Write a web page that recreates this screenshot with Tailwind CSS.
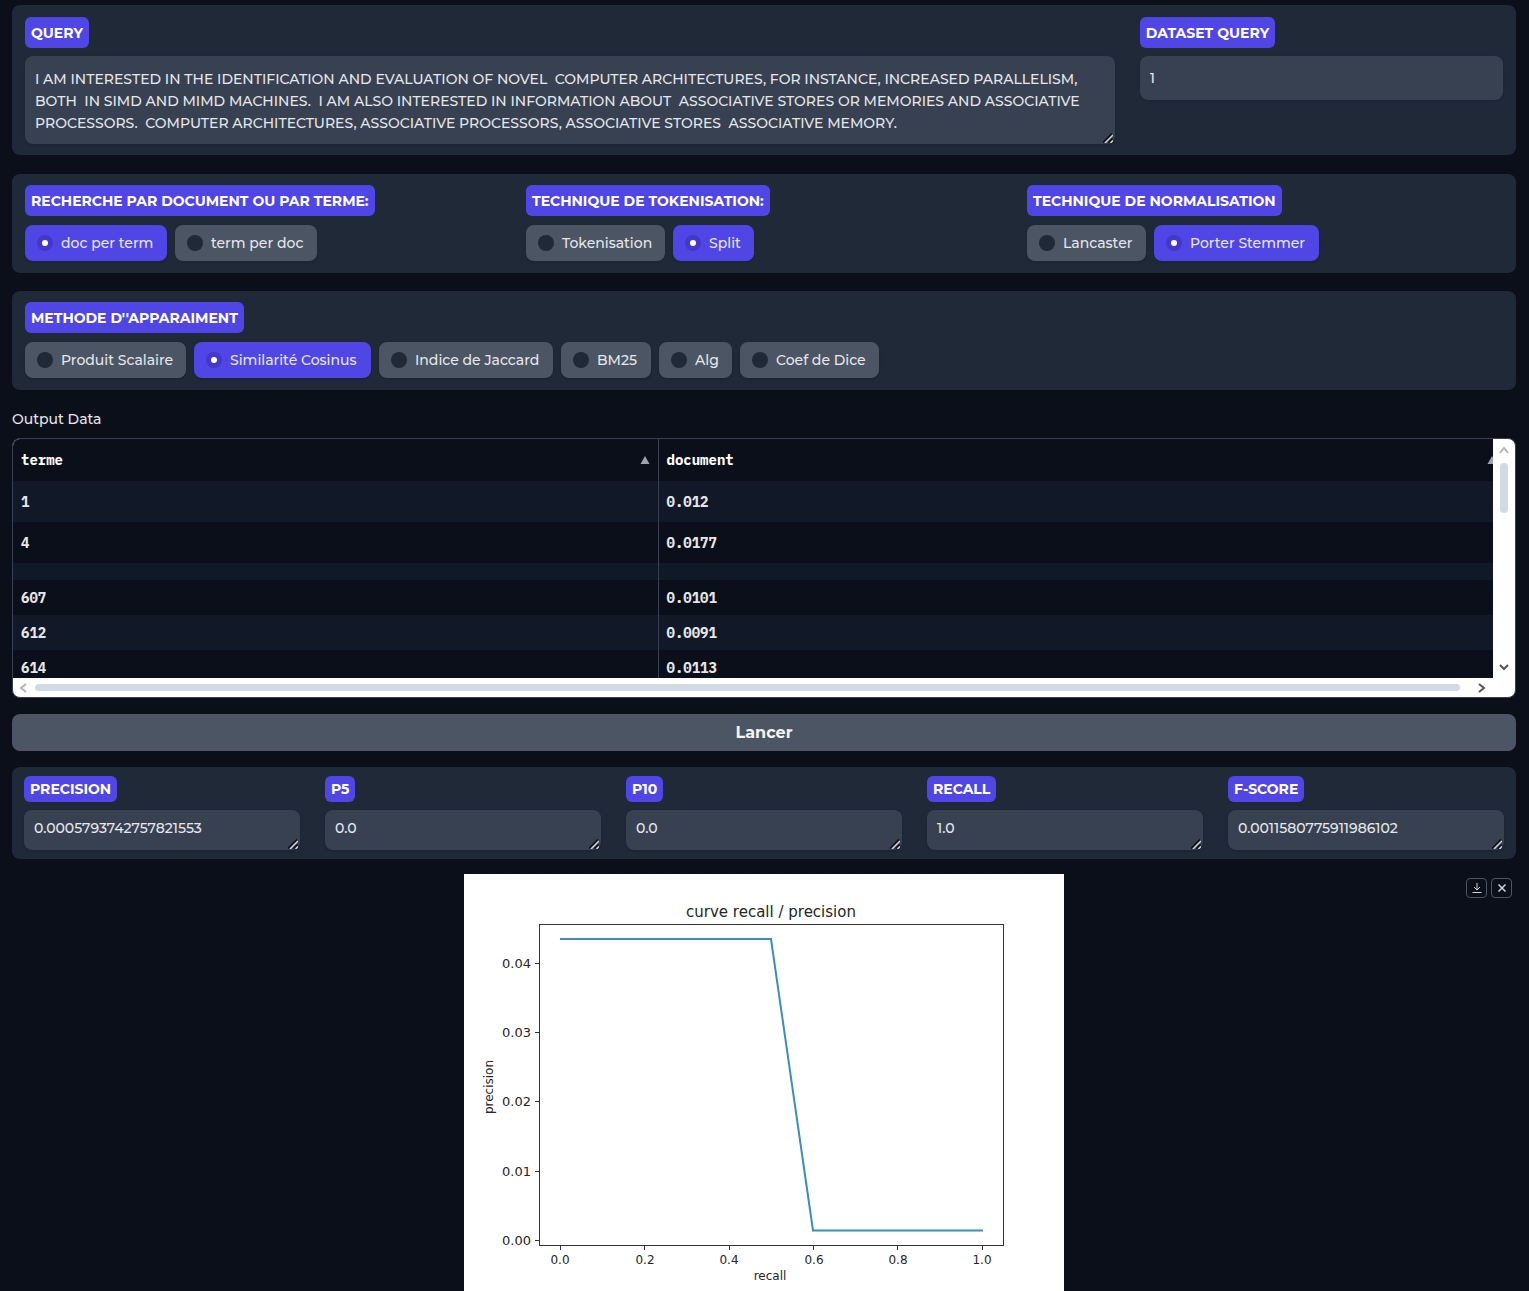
<!DOCTYPE html>
<html lang="fr">
<head>
<meta charset="utf-8">
<meta name="viewport" content="width=device-width, initial-scale=1">
<title>Recherche d'information</title>
<script src="https://cdn.jsdelivr.net/npm/@tailwindcss/browser@4"></script>
</head>
<body class="bg-[#0b0f19] pl-3 pr-[13px] pt-[5px] font-['Montserrat','Inter',sans-serif] text-sm font-medium text-[#e5e7eb]">
<main class="flex flex-col">

  <!-- Query -->
  <section class="grid grid-cols-[3fr_1fr] items-start gap-[25px] rounded-lg bg-[#1f2937] px-[13px] pb-[11px] pt-3">
    <div class="flex flex-col items-start gap-2">
      <label for="query" class="flex h-[31px] items-center rounded-md bg-[#4f46e5] px-1.5 font-bold text-white">QUERY</label>
      <div class="relative w-full">
        <textarea id="query" class="block h-[88px] w-full resize-none overflow-hidden whitespace-pre rounded-lg bg-[#374151] px-[10px] py-3 leading-[22px] shadow-sm">I AM INTERESTED IN THE IDENTIFICATION AND EVALUATION OF NOVEL  COMPUTER ARCHITECTURES, FOR INSTANCE, INCREASED PARALLELISM,
BOTH  IN SIMD AND MIMD MACHINES.  I AM ALSO INTERESTED IN INFORMATION ABOUT  ASSOCIATIVE STORES OR MEMORIES AND ASSOCIATIVE
PROCESSORS.  COMPUTER ARCHITECTURES, ASSOCIATIVE PROCESSORS, ASSOCIATIVE STORES  ASSOCIATIVE MEMORY.</textarea>
        <svg class="pointer-events-none absolute bottom-px right-0.5 size-[10px] fill-none" viewBox="0 0 10 10"><path class="stroke-black/80 stroke-[1.500]" d="M0 9.500 9 .5M5.500 9.500l4-4"/><path class="stroke-[#d1d5db] stroke-[1.500]" d="M2 10l8-8M7.500 10 10 7.500"/></svg>
      </div>
    </div>
    <div class="flex flex-col items-start gap-2">
      <label for="dataset" class="flex h-[31px] items-center rounded-md bg-[#4f46e5] px-1.5 font-bold text-white">DATASET QUERY</label>
      <input id="dataset" type="text" value="1" class="h-11 w-full rounded-lg bg-[#374151] px-[10px] shadow-sm">
    </div>
  </section>

  <!-- Options -->
  <section class="mt-[19px] grid grid-cols-3 gap-[25px] rounded-lg bg-[#1f2937] px-[13px] pb-3 pt-[11px]">
    <fieldset class="min-w-0">
      <legend class="mb-[9px] flex h-[31px] items-center whitespace-nowrap rounded-md bg-[#4f46e5] px-1.5 font-bold text-white">RECHERCHE PAR DOCUMENT OU PAR TERME:</legend>
      <div class="flex gap-2">
        <label class="flex h-9 min-w-[142px] items-center gap-2 whitespace-nowrap rounded-lg bg-[#4f46e5] px-3 shadow-sm"><input type="radio" name="mode" checked class="size-4 appearance-none rounded-full border-[5px] border-[#4338ca] bg-white">doc per term</label>
        <label class="flex h-9 min-w-[142px] items-center gap-2 whitespace-nowrap rounded-lg bg-[#4b5563] px-3 shadow-sm"><input type="radio" name="mode" class="size-4 appearance-none rounded-full bg-[#1f2937]">term per doc</label>
      </div>
    </fieldset>
    <fieldset class="min-w-0">
      <legend class="mb-[9px] flex h-[31px] items-center whitespace-nowrap rounded-md bg-[#4f46e5] px-1.5 font-bold text-white">TECHNIQUE DE TOKENISATION:</legend>
      <div class="flex gap-2">
        <label class="flex h-9 min-w-[139px] items-center gap-2 whitespace-nowrap rounded-lg bg-[#4b5563] px-3 shadow-sm"><input type="radio" name="token" class="size-4 appearance-none rounded-full bg-[#1f2937]">Tokenisation</label>
        <label class="flex h-9 min-w-[81px] items-center gap-2 whitespace-nowrap rounded-lg bg-[#4f46e5] px-3 shadow-sm"><input type="radio" name="token" checked class="size-4 appearance-none rounded-full border-[5px] border-[#4338ca] bg-white">Split</label>
      </div>
    </fieldset>
    <fieldset class="min-w-0">
      <legend class="mb-[9px] flex h-[31px] items-center whitespace-nowrap rounded-md bg-[#4f46e5] px-1.5 font-bold text-white">TECHNIQUE DE NORMALISATION</legend>
      <div class="flex gap-2">
        <label class="flex h-9 min-w-[119px] items-center gap-2 whitespace-nowrap rounded-lg bg-[#4b5563] px-3 shadow-sm"><input type="radio" name="norm" class="size-4 appearance-none rounded-full bg-[#1f2937]">Lancaster</label>
        <label class="flex h-9 min-w-[165px] items-center gap-2 whitespace-nowrap rounded-lg bg-[#4f46e5] px-3 shadow-sm"><input type="radio" name="norm" checked class="size-4 appearance-none rounded-full border-[5px] border-[#4338ca] bg-white">Porter Stemmer</label>
      </div>
    </fieldset>
  </section>

  <!-- Matching method -->
  <section class="mt-[18px] rounded-lg bg-[#1f2937] px-[13px] pb-3 pt-[11px]">
    <fieldset class="min-w-0">
      <legend class="mb-[9px] flex h-[31px] items-center whitespace-nowrap rounded-md bg-[#4f46e5] px-1.5 font-bold text-white">METHODE D''APPARAIMENT</legend>
      <div class="flex flex-wrap gap-2">
        <label class="flex h-9 min-w-[161px] items-center gap-2 whitespace-nowrap rounded-lg bg-[#4b5563] px-3 shadow-sm"><input type="radio" name="method" class="size-4 appearance-none rounded-full bg-[#1f2937]">Produit Scalaire</label>
        <label class="flex h-9 min-w-[177px] items-center gap-2 whitespace-nowrap rounded-lg bg-[#4f46e5] px-3 shadow-sm"><input type="radio" name="method" checked class="size-4 appearance-none rounded-full border-[5px] border-[#4338ca] bg-white">Similarité Cosinus</label>
        <label class="flex h-9 min-w-[174px] items-center gap-2 whitespace-nowrap rounded-lg bg-[#4b5563] px-3 shadow-sm"><input type="radio" name="method" class="size-4 appearance-none rounded-full bg-[#1f2937]">Indice de Jaccard</label>
        <label class="flex h-9 min-w-[90px] items-center gap-2 whitespace-nowrap rounded-lg bg-[#4b5563] px-3 shadow-sm"><input type="radio" name="method" class="size-4 appearance-none rounded-full bg-[#1f2937]">BM25</label>
        <label class="flex h-9 min-w-[73px] items-center gap-2 whitespace-nowrap rounded-lg bg-[#4b5563] px-3 shadow-sm"><input type="radio" name="method" class="size-4 appearance-none rounded-full bg-[#1f2937]">Alg</label>
        <label class="flex h-9 min-w-[139px] items-center gap-2 whitespace-nowrap rounded-lg bg-[#4b5563] px-3 shadow-sm"><input type="radio" name="method" class="size-4 appearance-none rounded-full bg-[#1f2937]">Coef de Dice</label>
      </div>
    </fieldset>
  </section>

  <!-- Results -->
  <h2 class="mt-[18px] leading-[22px]" id="output">Output Data</h2>
  <div class="mt-2 overflow-hidden rounded-lg border border-[#374151] bg-white">
    <div class="flex">
      <div class="h-[239px] min-w-0 flex-1 overflow-hidden bg-[#0b0f19]">
        <table aria-labelledby="output" class="w-full table-fixed border-collapse text-left font-['IBM_Plex_Mono','Liberation_Mono',monospace] text-sm font-bold">
          <colgroup><col class="w-[645px]"><col></colgroup>
          <thead>
            <tr class="h-[42px] text-white">
              <th class="border-r border-[#374151] px-2"><div class="flex items-center justify-between">terme<svg class="h-2 w-[10px] fill-[#9ca3af]" viewBox="0 0 10 8"><path d="M5 0 9.500 8H.5Z"/></svg></div></th>
              <th class="pl-2"><div class="flex items-center justify-between">document<svg class="-mr-1 h-2 w-[10px] fill-[#9ca3af]" viewBox="0 0 10 8"><path d="M5 0 9.500 8H.5Z"/></svg></div></th>
            </tr>
          </thead>
          <tbody>
            <tr class="h-[41px] bg-[#111827]"><td class="border-r border-[#374151] px-2">1</td><td class="px-2">0.012</td></tr>
            <tr class="h-[41px]"><td class="border-r border-[#374151] px-2">4</td><td class="px-2">0.0177</td></tr>
            <tr class="h-[17px] bg-[#111827]"><td class="border-r border-[#374151]"></td><td></td></tr>
            <tr class="h-[35px]"><td class="border-r border-[#374151] px-2">607</td><td class="px-2">0.0101</td></tr>
            <tr class="h-[35px] bg-[#111827]"><td class="border-r border-[#374151] px-2">612</td><td class="px-2">0.0091</td></tr>
            <tr class="h-[35px]"><td class="border-r border-[#374151] px-2">614</td><td class="px-2">0.0113</td></tr>
          </tbody>
        </table>
      </div>
      <div class="flex w-[22px] flex-col items-center pb-[6px] pt-[7px]" aria-hidden="true">
        <svg class="h-2 w-[10px] fill-none stroke-[#b5b5b5] stroke-2" viewBox="0 0 10 8"><path d="M1 7 5 2l4 5"/></svg>
        <div class="mt-[9px] h-[50px] w-2 rounded-full bg-[#d1dbe3]"></div>
        <svg class="mt-auto h-2 w-[10px] fill-none stroke-[#555] stroke-2" viewBox="0 0 10 8"><path d="M1 1l4 4 4-4"/></svg>
      </div>
    </div>
    <div class="flex h-[19px] items-center pl-[6px] pr-[29px]" aria-hidden="true">
      <svg class="h-[10px] w-2 fill-none stroke-[#b5b5b5] stroke-2" viewBox="0 0 8 10"><path d="M7 1 2 5l5 4"/></svg>
      <div class="ml-2 mr-[18px] h-[7px] flex-1 rounded-full bg-[#d1dbe3]"></div>
      <svg class="h-[10px] w-2 fill-none stroke-[#555] stroke-2" viewBox="0 0 8 10"><path d="M1 1l5 4-5 4"/></svg>
    </div>
  </div>

  <button type="button" class="mt-4 h-[37px] w-full rounded-lg bg-[#4b5563] text-base font-bold text-[#f3f4f6]">Lancer</button>

  <!-- Scores -->
  <section class="mt-4 grid grid-cols-5 gap-[25px] rounded-lg bg-[#1f2937] px-3 py-[9px]">
    <div class="flex flex-col items-start gap-2">
      <label for="precision" class="flex h-[26px] items-center rounded-md bg-[#4f46e5] px-1.5 font-bold text-white">PRECISION</label>
      <div class="relative w-full">
        <textarea id="precision" class="block h-10 w-full resize-none overflow-hidden rounded-lg bg-[#374151] px-[10px] py-[9px] leading-[18px] shadow-sm">0.0005793742757821553</textarea>
        <svg class="pointer-events-none absolute bottom-px right-0.5 size-[10px] fill-none" viewBox="0 0 10 10"><path class="stroke-black/80 stroke-[1.500]" d="M0 9.500 9 .5M5.500 9.500l4-4"/><path class="stroke-[#d1d5db] stroke-[1.500]" d="M2 10l8-8M7.500 10 10 7.500"/></svg>
      </div>
    </div>
    <div class="flex flex-col items-start gap-2">
      <label for="p5" class="flex h-[26px] items-center rounded-md bg-[#4f46e5] px-1.5 font-bold text-white">P5</label>
      <div class="relative w-full">
        <textarea id="p5" class="block h-10 w-full resize-none overflow-hidden rounded-lg bg-[#374151] px-[10px] py-[9px] leading-[18px] shadow-sm">0.0</textarea>
        <svg class="pointer-events-none absolute bottom-px right-0.5 size-[10px] fill-none" viewBox="0 0 10 10"><path class="stroke-black/80 stroke-[1.500]" d="M0 9.500 9 .5M5.500 9.500l4-4"/><path class="stroke-[#d1d5db] stroke-[1.500]" d="M2 10l8-8M7.500 10 10 7.500"/></svg>
      </div>
    </div>
    <div class="flex flex-col items-start gap-2">
      <label for="p10" class="flex h-[26px] items-center rounded-md bg-[#4f46e5] px-1.5 font-bold text-white">P10</label>
      <div class="relative w-full">
        <textarea id="p10" class="block h-10 w-full resize-none overflow-hidden rounded-lg bg-[#374151] px-[10px] py-[9px] leading-[18px] shadow-sm">0.0</textarea>
        <svg class="pointer-events-none absolute bottom-px right-0.5 size-[10px] fill-none" viewBox="0 0 10 10"><path class="stroke-black/80 stroke-[1.500]" d="M0 9.500 9 .5M5.500 9.500l4-4"/><path class="stroke-[#d1d5db] stroke-[1.500]" d="M2 10l8-8M7.500 10 10 7.500"/></svg>
      </div>
    </div>
    <div class="flex flex-col items-start gap-2">
      <label for="recall" class="flex h-[26px] items-center rounded-md bg-[#4f46e5] px-1.5 font-bold text-white">RECALL</label>
      <div class="relative w-full">
        <textarea id="recall" class="block h-10 w-full resize-none overflow-hidden rounded-lg bg-[#374151] px-[10px] py-[9px] leading-[18px] shadow-sm">1.0</textarea>
        <svg class="pointer-events-none absolute bottom-px right-0.5 size-[10px] fill-none" viewBox="0 0 10 10"><path class="stroke-black/80 stroke-[1.500]" d="M0 9.500 9 .5M5.500 9.500l4-4"/><path class="stroke-[#d1d5db] stroke-[1.500]" d="M2 10l8-8M7.500 10 10 7.500"/></svg>
      </div>
    </div>
    <div class="flex flex-col items-start gap-2">
      <label for="fscore" class="flex h-[26px] items-center rounded-md bg-[#4f46e5] px-1.5 font-bold text-white">F-SCORE</label>
      <div class="relative w-full">
        <textarea id="fscore" class="block h-10 w-full resize-none overflow-hidden rounded-lg bg-[#374151] px-[10px] py-[9px] leading-[18px] shadow-sm">0.0011580775911986102</textarea>
        <svg class="pointer-events-none absolute bottom-px right-0.5 size-[10px] fill-none" viewBox="0 0 10 10"><path class="stroke-black/80 stroke-[1.500]" d="M0 9.500 9 .5M5.500 9.500l4-4"/><path class="stroke-[#d1d5db] stroke-[1.500]" d="M2 10l8-8M7.500 10 10 7.500"/></svg>
      </div>
    </div>
  </section>

  <!-- Recall / precision curve -->
  <figure class="relative mt-[15px] flex justify-center">
    <svg class="h-[417px] w-[600px] bg-white font-['DejaVu_Sans',sans-serif] font-normal" viewBox="0 0 600 417" role="img" aria-label="curve recall / precision">
      <g class="fill-none stroke-[#333]">
        <rect x="75.500" y="50.500" width="464" height="321"/>
        <path d="M71 89.500h4M71 158.500h4M71 227.500h4M71 297.500h4M71 366.500h4M96.500 372v4M180.500 372v4M265.500 372v4M349.500 372v4M433.500 372v4M518.500 372v4"/>
      </g>
      <path class="fill-none stroke-[#3a8cc4] stroke-2" d="M96 65H307L349 356.500H519"/>
      <g class="fill-[#262626] text-[13px]">
        <text x="307" y="43" text-anchor="middle" class="text-[15px]">curve recall / precision</text>
        <g text-anchor="end">
          <text x="67" y="94">0.04</text><text x="67" y="163">0.03</text><text x="67" y="232">0.02</text><text x="67" y="302">0.01</text><text x="67" y="371">0.00</text>
        </g>
        <g text-anchor="middle" class="text-xs">
          <text x="96" y="390">0.0</text><text x="181" y="390">0.2</text><text x="265" y="390">0.4</text><text x="350" y="390">0.6</text><text x="434" y="390">0.8</text><text x="518" y="390">1.0</text>
          <text x="306" y="406">recall</text>
          <text transform="translate(29 213) rotate(-90)">precision</text>
        </g>
      </g>
    </svg>
    <div class="absolute right-1 top-1 flex gap-1">
      <button type="button" aria-label="Download" class="flex h-5 w-[21px] items-center justify-center rounded border border-[#4b5563]">
        <svg class="size-[10px] fill-none stroke-[#d1d5db]" viewBox="0 0 10 10"><path d="M5 0v6.500M2 4l3 3 3-3M.5 9.500h9"/></svg>
      </button>
      <button type="button" aria-label="Close" class="flex h-5 w-[21px] items-center justify-center rounded border border-[#4b5563]">
        <svg class="size-[10px] fill-none stroke-[#d1d5db] stroke-[1.500]" viewBox="0 0 10 10"><path d="M1.500 1.500l7 7M8.500 1.500l-7 7"/></svg>
      </button>
    </div>
  </figure>
</main>
</body>
</html>
